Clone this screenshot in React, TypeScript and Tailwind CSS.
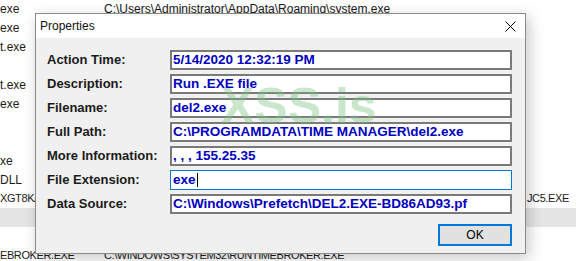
import React from 'react'

type Row = { left: string; mid?: string; right?: string; selected?: boolean; caps?: boolean }

const rows: Row[] = [
  { left: 'exe', mid: 'C:\\Users\\Administrator\\AppData\\Roaming\\system.exe' },
  { left: 'exe' },
  { left: 't.exe' },
  { left: '' },
  { left: 't.exe' },
  { left: 'exe' },
  { left: '' },
  { left: '' },
  { left: 'xe' },
  { left: 'DLL' },
  { left: 'XGT8KA', right: 'JC5.EXE', caps: true },
  { left: '', selected: true },
  { left: '' },
  { left: 'EBROKER.EXE', mid: 'C:\\WINDOWS\\SYSTEM32\\RUNTIMEBROKER.EXE', caps: true },
]

const fields = [
  { label: 'Action Time:', value: '5/14/2020 12:32:19 PM' },
  { label: 'Description:', value: 'Run .EXE file' },
  { label: 'Filename:', value: 'del2.exe' },
  { label: 'Full Path:', value: 'C:\\PROGRAMDATA\\TIME MANAGER\\del2.exe' },
  { label: 'More Information:', value: ', , , 155.25.35' },
  { label: 'File Extension:', value: 'exe', focused: true },
  { label: 'Data Source:', value: 'C:\\Windows\\Prefetch\\DEL2.EXE-BD86AD93.pf' },
]

function BackgroundList() {
  return (
    <div className="flex flex-col -mt-px text-[12px] text-[#1a1a1a]">
      {rows.map((r, i) => (
        <div
          key={i}
          className={`flex items-center h-[19px] shrink-0 whitespace-nowrap ${r.selected ? 'bg-[#e5e5e5]' : ''} ${
            r.caps ? 'text-[11px] tracking-[-0.4px]' : ''
          }`}
        >
          <div className="w-[104px] shrink-0 overflow-hidden">{r.left}</div>
          <div className="flex-1 overflow-hidden">{r.mid}</div>
          {r.right && <div className="w-[49px] shrink-0">{r.right}</div>}
        </div>
      ))}
    </div>
  )
}

function Field({ label, value, focused }: { label: string; value: string; focused?: boolean }) {
  return (
    <div className="flex items-center h-5">
      <div className="w-[123px] shrink-0 font-bold text-[13px] text-[#1a1a1a]">{label}</div>
      <div
        className={`flex items-center w-[342px] h-5 bg-white font-bold text-[13.5px] text-[#0000c0] whitespace-nowrap overflow-hidden ${
          focused ? 'border border-[#0078d7] pl-[2px]' : 'border-2 border-[#7a7a7a] pl-px'
        }`}
      >
        {value}
        {focused && <span className="ml-px w-px h-[14px] bg-black" />}
      </div>
    </div>
  )
}

export default function App() {
  return (
    <div
      className="relative w-[576px] h-[261px] overflow-hidden bg-white"
      style={{ fontFamily: '"Liberation Sans", Arial, sans-serif' }}
    >
      <BackgroundList />

      <div className="absolute left-[35px] top-[13px] w-[491px] h-[241px] flex flex-col border border-[#8a8a8a] bg-[#f0f0f0] shadow-[3px_4px_14px_rgba(0,0,0,0.22)]">
        <div className="flex items-center justify-between h-6 shrink-0 bg-white pl-1 pr-[9px]">
          <span className="text-[12px] text-[#111]">Properties</span>
          <svg width="11" height="11" viewBox="0 0 11 11" className="text-black">
            <path d="M0.5 0.5 L10.5 10.5 M10.5 0.5 L0.5 10.5" stroke="currentColor" strokeWidth="1" />
          </svg>
        </div>
        <div className="flex flex-col flex-1 pt-3 pl-[11px] pr-[13px]">
          <div className="flex flex-col gap-1">
            {fields.map((f) => (
              <Field key={f.label} {...f} />
            ))}
          </div>
          <div className="flex justify-end mt-[10px]">
            <button className="w-[74px] h-[22px] bg-[#e1e1e1] border-2 border-[#0078d7] text-[12px] text-black">
              OK
            </button>
          </div>
        </div>
      </div>

      <div className="absolute left-[221px] top-[81px] text-[50px] font-bold leading-none text-[#7cc487] opacity-40 pointer-events-none">
        XSS.is
      </div>
    </div>
  )
}
